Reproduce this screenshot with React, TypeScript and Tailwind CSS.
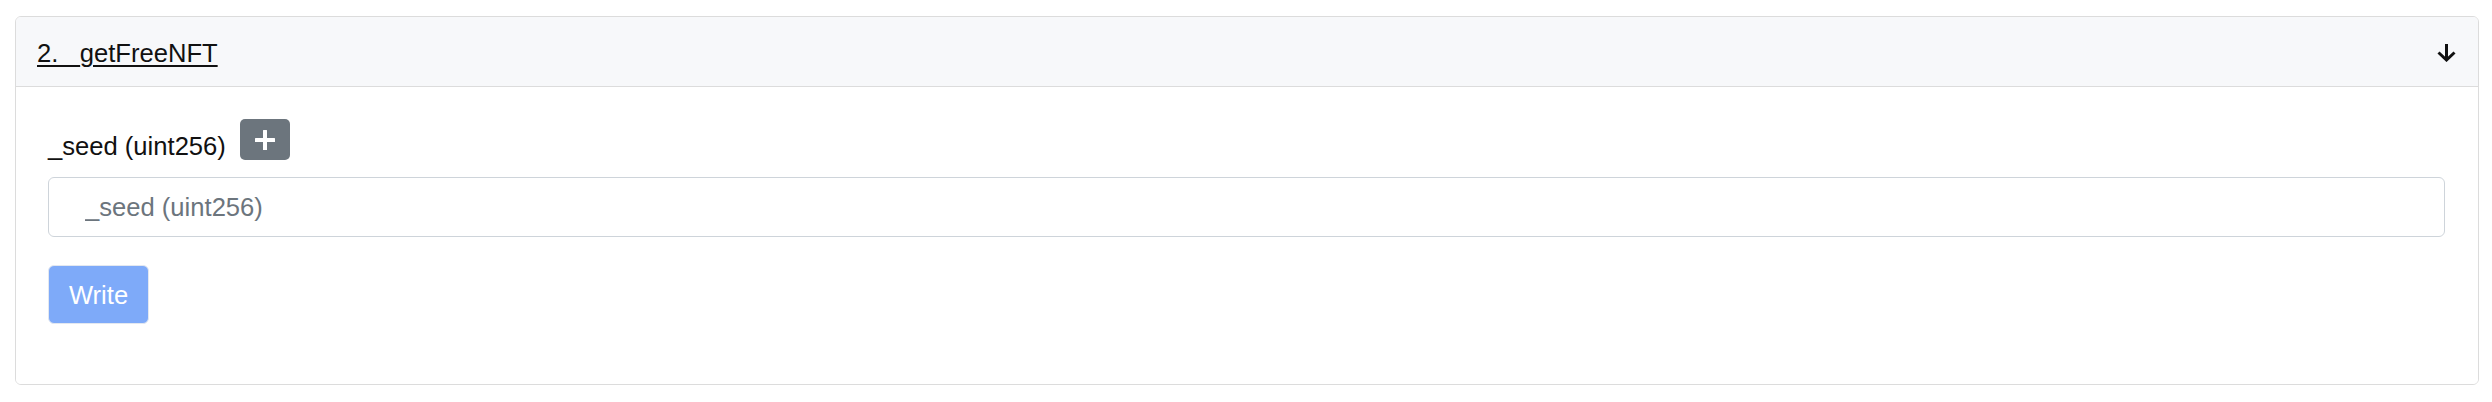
import React from "react";

export default function App() {
  const font = { fontFamily: '"Liberation Sans", Helvetica, Arial, sans-serif' };
  return (
    <div className="w-full bg-white pt-[16px] pl-[15px] pr-[13px]" style={font}>
      <div className="border border-[#dcdcdc] rounded-[6px] overflow-hidden">
        <div className="h-[70px] bg-[#f7f8fa] border-b border-[#dcdcdc] flex items-center justify-between pl-[21px] pr-[22px]">
          <span className="text-[25.6px] leading-[30px] text-[#111] underline underline-offset-[3px] decoration-[2px] pt-[3px]">
            2. _getFreeNFT
          </span>
          <svg width="19" height="19" viewBox="0 0 19 19" className="mt-[1px]">
            <path d="M9.5 1 V17" stroke="#111" strokeWidth="3" fill="none" />
            <path d="M1.5 9.5 L9.5 17 L17.5 9.5" stroke="#111" strokeWidth="3" fill="none" />
          </svg>
        </div>
        <div className="pl-[32px] pr-[33px] pt-[32px] pb-[60px] bg-white">
          <div className="flex items-start h-[41px]">
            <span className="text-[25.6px] leading-[30px] text-[#111] mt-[12px]">_seed (uint256)</span>
            <button className="ml-[14px] w-[50px] h-[41px] bg-[#6c757d] rounded-[5px] flex items-center justify-center">
              <svg width="20" height="20" viewBox="0 0 20 20">
                <rect x="0" y="8" width="20" height="4" fill="#fff" rx="0.5" />
                <rect x="8" y="0" width="4" height="20" fill="#fff" rx="0.5" />
              </svg>
            </button>
          </div>
          <input
            className="mt-[17px] block w-full h-[60px] border border-[#ced4da] rounded-[6px] pl-[36px] text-[25.6px] text-[#212529] placeholder:text-[#6c757d] outline-none"
            placeholder="_seed (uint256)"
            style={font}
          />
          <button
            className="mt-[28px] w-[101px] h-[59px] bg-[#7eaaf9] border border-[#e3e8f0] rounded-[6px] text-white text-[25.6px] leading-[30px] flex items-center justify-center"
            style={font}
          >
            Write
          </button>
        </div>
      </div>
    </div>
  );
}
